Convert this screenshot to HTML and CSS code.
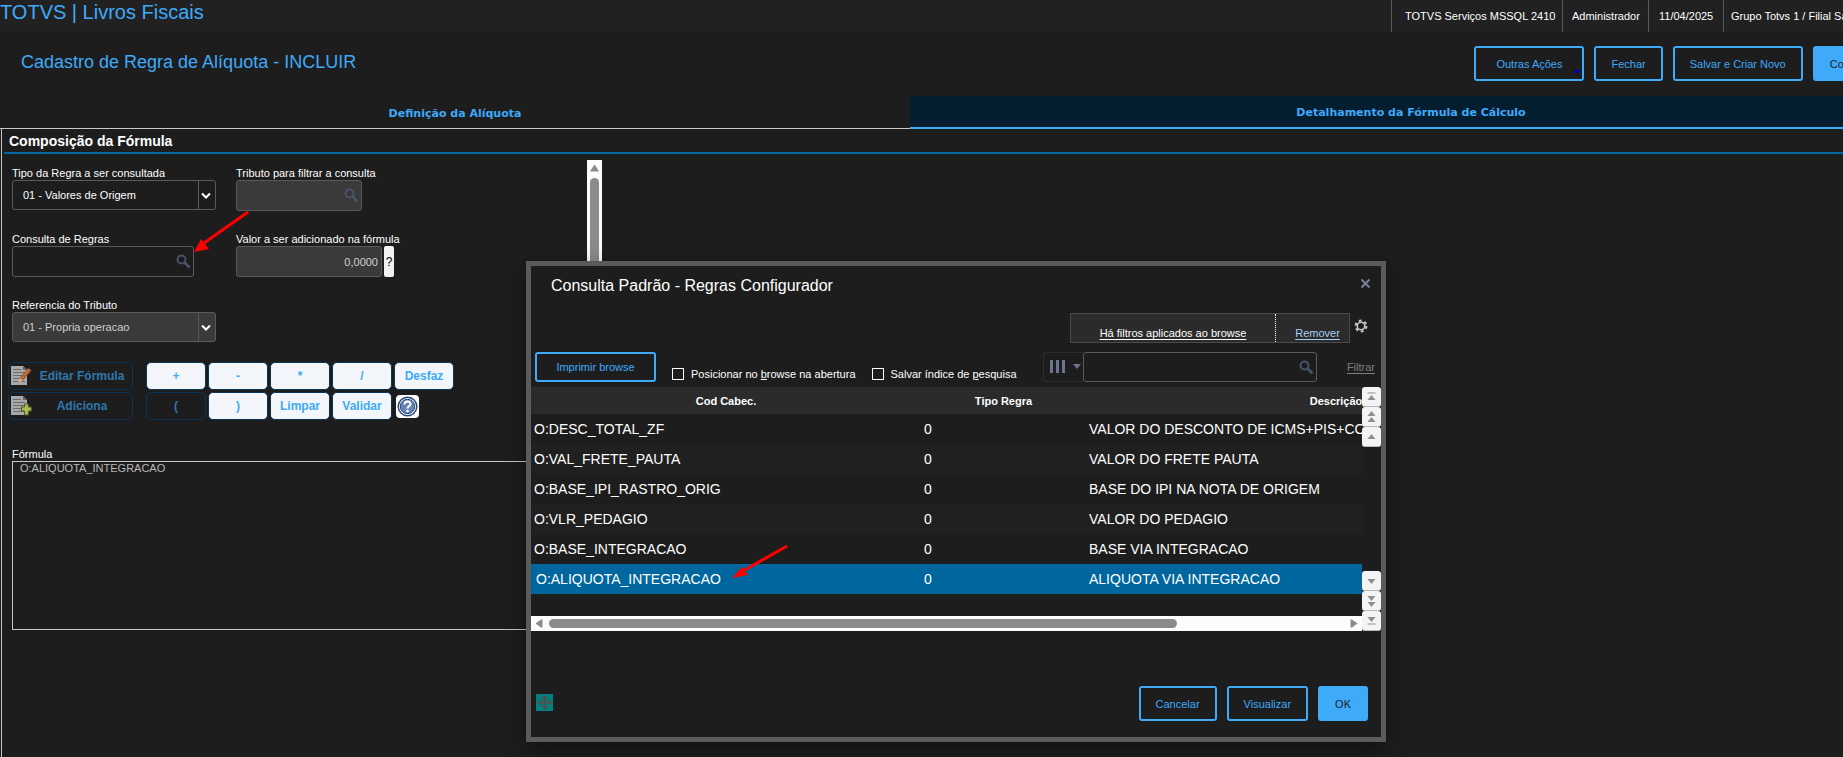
FILE: index.html
```html
<!DOCTYPE html>
<html lang="pt-BR">
<head>
<title>TOTVS | Livros Fiscais</title>
<meta charset="UTF-8">
<meta name="viewport" content="width=device-width, initial-scale=1.0">

<link rel="stylesheet" href="styles.css">

</head>
<body>

<!-- shared icons -->
<svg class="defs" width="0" height="0">
	<symbol id="lupa" viewBox="0 0 15 15">
		<circle cx="5.5" cy="5.5" r="4" fill="none" stroke="#465368" stroke-width="2"/>
		<path d="M8.5 8.5L13.5 13.5" stroke="#465368" stroke-width="2.6"/>
	</symbol>
	<symbol id="folha" viewBox="0 0 22 22">
		<path d="M1 1H13L17 5V20H1Z" fill="#a9a9a9"/>
		<path d="M13 1V5H17Z" fill="#606060"/>
		<path d="M3 4.5H11M3 7.5H15M3 10.5H15M3 13.5H15M3 16.5H15" stroke="#6a6a6a"/>
	</symbol>
</svg>

<div class="app">

<!-- *********************************************************
TOP BAR
********************************************************** -->

<header class="topbar">
	<h1>TOTVS | Livros Fiscais</h1>
	<ul class="session">
		<li class="env">TOTVS Serviços MSSQL 2410</li>
		<li class="user">Administrador</li>
		<li class="date">11/04/2025</li>
		<li class="branch">Grupo Totvs 1 / Filial Santos</li>
	</ul>
</header>

<div class="pagehead">
	<h2>Cadastro de Regra de Alíquota - INCLUIR</h2>
	<div class="actions">
		<button type="button" class="btn btn-menu">Outras Ações</button>
		<button type="button" class="btn">Fechar</button>
		<button type="button" class="btn">Salvar e Criar Novo</button>
		<button type="button" class="btn btn-main">Confirmar</button>
	</div>
</div>

<nav class="tabs">
	<button type="button" class="tab">Definição da Alíquota</button>
	<button type="button" class="tab active">Detalhamento da Fórmula de Cálculo</button>
</nav>

<!-- *********************************************************
FORMULA
********************************************************** -->

<main class="panel">
	<h3>Composição da Fórmula</h3>

	<div class="pane">
		<form class="form">
			<div class="fields">
				<div class="field">
					<label for="tipo">Tipo da Regra a ser consultada</label>
					<div class="combo">
						<select id="tipo"><option>01 - Valores de Origem</option></select>
						<svg width="18" height="28" viewBox="0 0 18 28"><path d="M1.5 0V28" stroke="#5a5a5a"/><path d="M5 12.5L9 16.5L13 12.5" fill="none" stroke="#fff" stroke-width="2"/></svg>
					</div>
				</div>
				<div class="field">
					<label for="tributo">Tributo para filtrar a consulta</label>
					<div class="lookup short">
						<input type="text" id="tributo" disabled>
						<svg width="15" height="15"><use href="#lupa"/></svg>
					</div>
				</div>
				<div class="field">
					<label for="regras">Consulta de Regras</label>
					<div class="lookup">
						<input type="text" id="regras">
						<svg width="15" height="15"><use href="#lupa"/></svg>
						<svg class="arrow arrow-rule" width="56" height="42" viewBox="0 0 56 42"><path d="M54 1L10 32" stroke="#f00" stroke-width="3"/><path d="M0 41L7 28L15 38Z" fill="#f00"/></svg>
					</div>
				</div>
				<div class="field">
					<label for="valor">Valor a ser adicionado na fórmula</label>
					<div class="amount">
						<input type="text" id="valor" value="0,0000" disabled>
						<button type="button">?</button>
					</div>
				</div>
				<div class="field">
					<label for="referencia">Referencia do Tributo</label>
					<div class="combo off">
						<select id="referencia" disabled><option>01 - Propria operacao</option></select>
						<svg width="18" height="28" viewBox="0 0 18 28"><path d="M1.5 0V28" stroke="#5a5a5a"/><path d="M5 12.5L9 16.5L13 12.5" fill="none" stroke="#fff" stroke-width="2"/></svg>
					</div>
				</div>
			</div>

			<div class="keypad">
				<button type="button" class="key wide off">
					<svg width="22" height="22" viewBox="0 0 22 22"><use href="#folha" width="22" height="22"/><path d="M8 18L9.5 13L18 3L21.5 5.5L13 15.5Z" fill="#a5572f"/><path d="M11 14L19.5 4" stroke="#d08a5c"/><path d="M8 18L9.5 13L13 15.5Z" fill="#d8b78a"/></svg>
					<span>Editar Fórmula</span>
				</button>
				<button type="button" class="key">+</button>
				<button type="button" class="key">-</button>
				<button type="button" class="key">*</button>
				<button type="button" class="key">/</button>
				<button type="button" class="key">Desfaz</button>
				<button type="button" class="key wide off">
					<svg width="22" height="22" viewBox="0 0 22 22"><use href="#folha" width="22" height="22"/><path d="M14.5 9H18.5V12H21.5V16H18.5V20H14.5V16H11.5V12H14.5Z" fill="#a9ba55" stroke="#4c5524"/></svg>
					<span>Adiciona</span>
				</button>
				<button type="button" class="key off">(</button>
				<button type="button" class="key">)</button>
				<button type="button" class="key">Limpar</button>
				<button type="button" class="key">Validar</button>
				<button type="button" class="help" aria-label="Ajuda">
					<svg width="21" height="21" viewBox="0 0 21 21"><circle cx="10.5" cy="10.5" r="9.3" fill="#fff" stroke="#27497f" stroke-width="1.5"/><circle cx="10.5" cy="10.5" r="7.2" fill="#6585b5" stroke="#27497f"/><path d="M7.5 8.5C7.5 4.5 13.5 4.5 13.5 8C13.5 10 10.5 10 10.5 12.5" fill="none" stroke="#fff" stroke-width="2"/><circle cx="10.5" cy="15" r="1.3" fill="#fff"/></svg>
				</button>
			</div>

			<div class="field">
				<label for="formula">Fórmula</label>
				<textarea id="formula" spellcheck="false">O:ALIQUOTA_INTEGRACAO</textarea>
			</div>
		</form>

		<div class="vscroll">
			<svg width="9" height="8" viewBox="0 0 9 8"><path d="M4.5 0.5L8.5 6.5V7.5H0.5V6.5Z" fill="#8b8b8b"/></svg>
			<div class="thumb"></div>
		</div>
	</div>
</main>

<!-- *********************************************************
LOOKUP WINDOW
********************************************************** -->

<div class="overlay">
<section class="modal">
	<header class="modal-head">
		<h2>Consulta Padrão - Regras Configurador</h2>
		<button type="button" class="close" aria-label="Fechar">
			<svg width="9" height="9" viewBox="0 0 9 9"><path d="M0.5 0.5L8.5 8.5M8.5 0.5L0.5 8.5" stroke="#77819a" stroke-width="2"/></svg>
		</button>
	</header>

	<div class="filterbar">
		<div class="filters">
			<a href="#">Há filtros aplicados ao browse</a>
			<a href="#" class="remove">Remover</a>
		</div>
		<button type="button" class="gear" aria-label="Configurar">
			<svg width="14" height="14" viewBox="0 0 14 14"><circle cx="7" cy="7" r="5.4" fill="none" stroke="#c8c8c8" stroke-width="2" stroke-dasharray="2.8 2.85"/><circle cx="7" cy="7" r="3.8" fill="none" stroke="#c8c8c8" stroke-width="1.6"/></svg>
		</button>
	</div>

	<div class="toolbar">
		<button type="button" class="btn print">Imprimir browse</button>
		<label class="check"><input type="checkbox">Posicionar no <u>b</u>rowse na abertura</label>
		<label class="check"><input type="checkbox">Salvar índice de <u>p</u>esquisa</label>
		<button type="button" class="columns" aria-label="Colunas">
			<svg width="32" height="14" viewBox="0 0 32 14"><path d="M1.5 0V13M7.5 0V13M13.5 0V13" stroke="#6b7590" stroke-width="3"/><path d="M23 4H31L27 9Z" fill="#6b7590"/></svg>
		</button>
		<div class="lookup search">
			<input type="text" aria-label="Pesquisar">
			<svg width="15" height="15"><use href="#lupa"/></svg>
		</div>
		<a href="#" class="filter">Filtrar</a>
	</div>

	<div class="browse">
		<div class="grid-wrap">
			<div class="rows">
				<table>
					<colgroup><col class="c-code"><col class="c-type"><col class="c-desc"></colgroup>
					<thead>
						<tr><th>Cod Cabec.</th><th>Tipo Regra</th><th>Descrição</th></tr>
					</thead>
					<tbody>
						<tr><td>O:DESC_TOTAL_ZF</td><td>0</td><td>VALOR DO DESCONTO DE ICMS+PIS+COFINS</td></tr>
						<tr><td>O:VAL_FRETE_PAUTA</td><td>0</td><td>VALOR DO FRETE PAUTA</td></tr>
						<tr><td>O:BASE_IPI_RASTRO_ORIG</td><td>0</td><td>BASE DO IPI NA NOTA DE ORIGEM</td></tr>
						<tr><td>O:VLR_PEDAGIO</td><td>0</td><td>VALOR DO PEDAGIO</td></tr>
						<tr><td>O:BASE_INTEGRACAO</td><td>0</td><td>BASE VIA INTEGRACAO</td></tr>
						<tr class="selected"><td>O:ALIQUOTA_INTEGRACAO<svg class="arrow arrow-row" width="58" height="36" viewBox="0 0 58 36"><path d="M55 2L11 27" stroke="#f00" stroke-width="3"/><path d="M0 34L10 23L16 31Z" fill="#f00"/></svg></td><td>0</td><td>ALIQUOTA VIA INTEGRACAO</td></tr>
					</tbody>
				</table>
			</div>
			<div class="hscroll">
				<svg width="8" height="9" viewBox="0 0 8 9"><path d="M0.5 4.5L6 0.5H7.5V8.5H6Z" fill="#8b8b8b"/></svg>
				<div class="track"><div class="thumb"></div></div>
				<svg width="8" height="9" viewBox="0 0 8 9"><path d="M7.5 4.5L2 0.5H0.5V8.5H2Z" fill="#8b8b8b"/></svg>
			</div>
		</div>
		<div class="pager">
			<button type="button" aria-label="Primeiro"><svg width="9" height="9" viewBox="0 0 9 9"><path d="M0.5 1H8.5" stroke="#8f8f8f"/><path d="M4.5 3L8.5 8H0.5Z" fill="#8f8f8f"/></svg></button>
			<button type="button" aria-label="Página anterior"><svg width="9" height="12" viewBox="0 0 9 12"><path d="M4.5 0L8.5 5H0.5ZM4.5 6L8.5 11H0.5Z" fill="#8f8f8f"/></svg></button>
			<button type="button" aria-label="Anterior"><svg width="9" height="6" viewBox="0 0 9 6"><path d="M4.5 0L8.5 5H0.5Z" fill="#8f8f8f"/></svg></button>
			<div class="spacer"></div>
			<button type="button" aria-label="Próximo"><svg width="9" height="6" viewBox="0 0 9 6"><path d="M4.5 6L8.5 1H0.5Z" fill="#8f8f8f"/></svg></button>
			<button type="button" aria-label="Próxima página"><svg width="9" height="12" viewBox="0 0 9 12"><path d="M4.5 6L8.5 1H0.5ZM4.5 12L8.5 7H0.5Z" fill="#8f8f8f"/></svg></button>
			<button type="button" aria-label="Último"><svg width="9" height="9" viewBox="0 0 9 9"><path d="M0.5 8H8.5" stroke="#8f8f8f"/><path d="M4.5 6L8.5 1H0.5Z" fill="#8f8f8f"/></svg></button>
		</div>
	</div>

	<footer class="modal-foot">
		<button type="button" class="move" aria-label="Mover">
			<svg width="17" height="17" viewBox="0 0 17 17"><path d="M8.5 2V15M2 8.5H15" stroke="#505050" stroke-width="2"/><path d="M8.5 1L12 5H5ZM8.5 16L12 12H5ZM1 8.5L5 5V12ZM16 8.5L12 5V12Z" fill="#505050"/></svg>
		</button>
		<button type="button" class="btn">Cancelar</button>
		<button type="button" class="btn">Visualizar</button>
		<button type="button" class="btn btn-main">OK</button>
	</footer>
</section>
</div>

</div>

</body>
</html>
```
FILE: styles.css
```css
*{
	box-sizing: border-box;
}

body{
	margin: 0px;
	min-height: 100vh;
	overflow: hidden;
	background: #1d1d1d;
	color: #fff;
	font-size: 11px;
	font-family: "Liberation Sans", Arial, sans-serif;
}

h1, h2, h3, ul{
	margin: 0px;
	padding: 0px;
	font-weight: normal;
}

svg{
	display: block;
	flex: none;
}

a{
	color: inherit;
}

button, input, select, textarea{
	font: inherit;
	color: inherit;
	margin: 0px;
	padding: 0px;
	border: none;
	background: none;
	border-radius: 0px;
}

.defs{
	position: absolute;
}

/* the workspace runs past the right edge of the window */
.app{
	position: relative;
	display: flex;
	flex-direction: column;
	width: calc(100% + 69px);
	min-height: 100vh;
}


/*********************************************************
TOP BAR
**********************************************************/

.topbar{
	display: flex;
	justify-content: space-between;
	height: 32px;
	background: #212121;
}

.topbar h1{
	font-size: 20px;
	line-height: 24px;
	color: #3eaaf9;
}

.session{
	display: flex;
	list-style: none;
	line-height: 32px;
	white-space: nowrap;
}

.session li{
	border-left: 1px solid #5a5a5a;
	padding-left: 9px;
}

.session .env{
	width: 171px;
	padding-left: 13px;
}

.session .user{
	width: 86px;
}

.session .date{
	width: 75px;
	padding-left: 10px;
}

.session .branch{
	width: 189px;
	padding-left: 7px;
}

.pagehead{
	display: flex;
	justify-content: space-between;
	padding: 14px 17px 15px 21px;
}

.pagehead h2{
	font-size: 18px;
	line-height: 32px;
	color: #3eaaf9;
}

.actions{
	display: flex;
	gap: 10px;
}

.btn{
	height: 35px;
	padding: 0px 15px;
	border: 2px solid #3eaaf9;
	border-radius: 3px;
	color: #3eaaf9;
	white-space: nowrap;
}

.btn-main{
	background: #3eaaf9;
	color: #1d1d1d;
}

.btn-menu{
	position: relative;
	padding: 0px 20px;
}

.btn-menu:after{
	content: '';
	position: absolute;
	right: 1px;
	bottom: 5px;
	border: 4px solid transparent;
	border-top-color: #0000a8;
	border-bottom: none;
}

.tabs{
	display: grid;
	grid-template-columns: 910fr 1002fr;
}

.tab{
	height: 33px;
	padding-top: 2px;
	border-bottom: 1px solid #c8c8c8;
	color: #3eaaf9;
	font-family: "DejaVu Sans", Verdana, sans-serif;
	font-weight: bold;
}

.tab.active{
	background: #051e2f;
	border-bottom: 2px solid #3eaaf9;
}


/*********************************************************
FORMULA
**********************************************************/

.panel{
	flex: 1;
	margin-left: 1px;
	border-left: 1px solid #c8c8c8;
}

.panel h3{
	margin-left: 2px;
	padding: 2px 0px 0px 5px;
	font-size: 14px;
	font-weight: bold;
	line-height: 21px;
	border-bottom: 2px solid #0067a0;
}

.pane{
	display: flex;
	justify-content: space-between;
	width: 600px;
	margin-top: 6px;
}

.form{
	padding: 6px 0px 0px 6px;
}

.fields{
	display: grid;
	grid-template-columns: 204px 160px;
	gap: 5px 20px;
	padding-left: 4px;
}

.field{
	height: 61px;
	white-space: nowrap;
}

.field label{
	display: block;
	line-height: 14px;
}

.combo{
	display: flex;
	height: 30px;
	border: 1px solid #5a5a5a;
	border-radius: 3px;
}

.combo select{
	flex: 1;
	padding-left: 10px;
	appearance: none;
	opacity: 1;
}

.combo.off{
	background: #3a3a3a;
	color: #d0d0d0;
}

.lookup{
	position: relative;
	display: flex;
	align-items: center;
	width: 182px;
	height: 31px;
	padding-right: 2px;
	border: 1px solid #5a5a5a;
	border-radius: 3px;
}

.lookup input{
	flex: 1;
	min-width: 0px;
	height: 100%;
}

.lookup.short{
	width: 126px;
	background: #3a3a3a;
}

.amount{
	display: flex;
	gap: 2px;
}

.amount input{
	width: 146px;
	height: 31px;
	padding-right: 3px;
	border: 1px solid #5a5a5a;
	border-radius: 3px;
	background: #3a3a3a;
	color: #d0d0d0;
	text-align: right;
}

.amount button{
	width: 10px;
	border-radius: 2px;
	background: #f2f2f2;
	color: #000;
	font-size: 12px;
}

.arrow{
	position: absolute;
}

.arrow-rule{
	left: 181px;
	top: -36px;
}

.keypad{
	display: grid;
	grid-template-columns: 136px repeat(5, 60px);
	gap: 2px;
	margin-top: 3px;
}

.key{
	height: 28px;
	border: 1px solid #0a3558;
	border-radius: 5px;
	background: #f3f7fb;
	color: #3eaaf9;
	font-size: 12px;
	font-weight: bold;
}

.key.off{
	background: none;
	color: #2f78ad;
}

.key.wide{
	display: flex;
	align-items: center;
	width: 125px;
	padding-left: 1px;
}

.key.wide span{
	flex: 1;
}

.help{
	display: flex;
	align-items: center;
	justify-content: center;
	width: 23px;
	height: 23px;
	margin: 3px 2px;
	border-radius: 4px;
	background: #fff;
}

.keypad + .field{
	height: auto;
	margin-top: 26px;
	padding-left: 4px;
}

textarea{
	display: block;
	width: 560px;
	height: 169px;
	padding: 0px 7px;
	border: 1px solid #c8c8c8;
	color: #b8b8b8;
	line-height: 13px;
	resize: none;
}

.vscroll{
	display: flex;
	flex-direction: column;
	align-items: center;
	gap: 6px;
	width: 15px;
	padding: 4px 0px;
	background: #fcfcfc;
}

.vscroll .thumb{
	flex: 1;
	width: 9px;
	border-radius: 5px;
	background: #8b8b8b;
}


/*********************************************************
LOOKUP WINDOW
**********************************************************/

.overlay{
	position: absolute;
	top: 261px;
	left: 0px;
	right: 0px;
	display: flex;
	justify-content: center;
}

.modal{
	width: 860px;
	border: 5px solid #5b5b5b;
	background: #1d1d1d;
	box-shadow: 0px 8px 24px rgba(0, 0, 0, 0.4);
}

.modal-head{
	display: flex;
	justify-content: space-between;
	align-items: center;
	height: 38px;
	padding: 0px 11px 0px 20px;
}

.modal-head h2{
	padding-top: 2px;
	font-size: 16px;
}

.close{
	margin-bottom: 4px;
}

.filterbar{
	display: flex;
	justify-content: flex-end;
	gap: 4px;
	margin-top: 9px;
	padding-right: 13px;
}

.filters{
	display: grid;
	grid-template-columns: 204px 1fr;
	grid-template-rows: 28px;
	width: 280px;
	height: 30px;
	border: 1px solid #4a4a4a;
	background: #2b2b2b;
	line-height: 38px;
	text-align: center;
	text-underline-offset: 2px;
}

.filters .remove{
	padding-left: 10px;
	border-left: 1px dotted #fff;
	color: #a9cdf8;
}

.gear{
	align-self: flex-start;
	margin-top: 6px;
}

.toolbar{
	display: flex;
	align-items: center;
	height: 30px;
	margin-top: 9px;
	padding: 0px 6px 0px 4px;
}

.btn.print{
	width: 121px;
	height: 30px;
}

.check{
	display: flex;
	align-items: center;
	margin: 13px 0px 0px 16px;
	white-space: pre;
}

.check input{
	appearance: none;
	width: 12px;
	height: 12px;
	margin-right: 7px;
	border: 1px solid #fff;
}

.columns{
	display: flex;
	align-items: center;
	width: 40px;
	height: 30px;
	margin-left: auto;
	padding-left: 6px;
	border: 1px solid #2c2c2c;
	border-right: none;
	border-radius: 3px 0px 0px 3px;
}

.lookup.search{
	width: 234px;
	height: 30px;
}

.filter{
	margin-left: 30px;
	color: #7d7d7d;
	text-underline-offset: 2px;
}

.browse{
	display: flex;
	margin-top: 5px;
}

.grid-wrap{
	flex: 1;
	min-width: 0px;
}

.rows{
	height: 229px;
	overflow: hidden;
}

table{
	table-layout: fixed;
	width: 1055px;
	border-collapse: collapse;
}

.c-code{
	width: 390px;
}

.c-type{
	width: 165px;
}

th{
	height: 27px;
	padding: 0px;
	background: #2b2b2b;
	font-weight: bold;
}

td{
	position: relative;
	height: 30px;
	padding: 0px 3px;
	font-size: 14px;
	white-space: nowrap;
}

tbody tr:nth-child(even){
	background: #202020;
}

tbody tr.selected{
	background: #00669e;
}

.selected td:first-child{
	padding-left: 5px;
}

.arrow-row{
	left: 201px;
	top: -20px;
}

.hscroll{
	display: flex;
	align-items: center;
	gap: 6px;
	height: 15px;
	padding: 0px 4px;
	background: #fcfcfc;
}

.hscroll .track{
	flex: 1;
}

.hscroll .thumb{
	width: 79%;
	height: 9px;
	border-radius: 5px;
	background: #8b8b8b;
}

.pager{
	display: flex;
	flex-direction: column;
	width: 19px;
}

.pager button{
	display: flex;
	align-items: center;
	justify-content: center;
	height: 20px;
	border-bottom: 1px solid #b8b8b8;
	border-radius: 3px;
	background: #f4f4f6;
}

.pager .spacer{
	flex: 1;
}

.modal-foot{
	display: flex;
	align-items: center;
	gap: 10px;
	padding: 55px 13px 16px 5px;
}

.move{
	margin: 0px auto 2px 0px;
	background: #008080;
}
```
